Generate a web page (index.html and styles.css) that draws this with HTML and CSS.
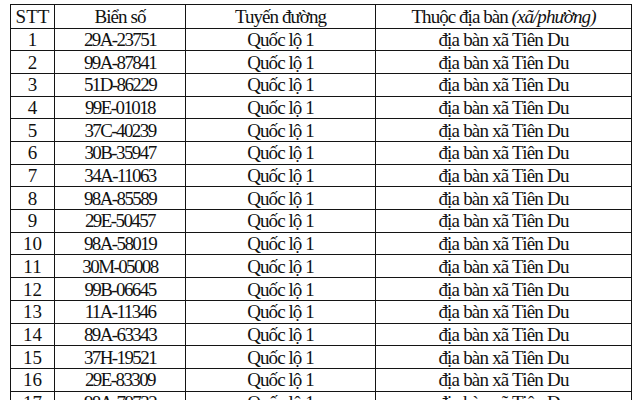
FILE: index.html
```html
<!DOCTYPE html>
<html lang="vi">
<head>
<meta charset="utf-8">
<title>Danh sách biển số</title>
<link rel="stylesheet" href="styles.css">
</head>
<body>
<table class="list">
  <colgroup>
    <col class="c-stt"><col class="c-plate"><col class="c-road"><col class="c-area">
  </colgroup>
  <thead>
    <tr><th class="stt">STT</th><th class="plate-h">Biển số</th><th class="road">Tuyến đường</th><th class="area-h">Thuộc địa bàn <i>(xã/phường)</i></th></tr>
  </thead>
  <tbody>
    <tr><td class="stt">1</td><td class="plate">29A-23751</td><td class="road">Quốc lộ 1</td><td class="area">địa bàn xã Tiên Du</td></tr>
    <tr><td class="stt">2</td><td class="plate">99A-87841</td><td class="road">Quốc lộ 1</td><td class="area">địa bàn xã Tiên Du</td></tr>
    <tr><td class="stt">3</td><td class="plate">51D-86229</td><td class="road">Quốc lộ 1</td><td class="area">địa bàn xã Tiên Du</td></tr>
    <tr><td class="stt">4</td><td class="plate">99E-01018</td><td class="road">Quốc lộ 1</td><td class="area">địa bàn xã Tiên Du</td></tr>
    <tr><td class="stt">5</td><td class="plate">37C-40239</td><td class="road">Quốc lộ 1</td><td class="area">địa bàn xã Tiên Du</td></tr>
    <tr><td class="stt">6</td><td class="plate">30B-35947</td><td class="road">Quốc lộ 1</td><td class="area">địa bàn xã Tiên Du</td></tr>
    <tr><td class="stt">7</td><td class="plate">34A-11063</td><td class="road">Quốc lộ 1</td><td class="area">địa bàn xã Tiên Du</td></tr>
    <tr><td class="stt">8</td><td class="plate">98A-85589</td><td class="road">Quốc lộ 1</td><td class="area">địa bàn xã Tiên Du</td></tr>
    <tr><td class="stt">9</td><td class="plate">29E-50457</td><td class="road">Quốc lộ 1</td><td class="area">địa bàn xã Tiên Du</td></tr>
    <tr><td class="stt">10</td><td class="plate">98A-58019</td><td class="road">Quốc lộ 1</td><td class="area">địa bàn xã Tiên Du</td></tr>
    <tr><td class="stt">11</td><td class="plate">30M-05008</td><td class="road">Quốc lộ 1</td><td class="area">địa bàn xã Tiên Du</td></tr>
    <tr><td class="stt">12</td><td class="plate">99B-06645</td><td class="road">Quốc lộ 1</td><td class="area">địa bàn xã Tiên Du</td></tr>
    <tr><td class="stt">13</td><td class="plate">11A-11346</td><td class="road">Quốc lộ 1</td><td class="area">địa bàn xã Tiên Du</td></tr>
    <tr><td class="stt">14</td><td class="plate">89A-63343</td><td class="road">Quốc lộ 1</td><td class="area">địa bàn xã Tiên Du</td></tr>
    <tr><td class="stt">15</td><td class="plate">37H-19521</td><td class="road">Quốc lộ 1</td><td class="area">địa bàn xã Tiên Du</td></tr>
    <tr><td class="stt">16</td><td class="plate">29E-83309</td><td class="road">Quốc lộ 1</td><td class="area">địa bàn xã Tiên Du</td></tr>
    <tr><td class="stt">17</td><td class="plate">98A-79732</td><td class="road">Quốc lộ 1</td><td class="area">địa bàn xã Tiên Du</td></tr>
    <tr><td class="stt">18</td><td class="plate">99A-12345</td><td class="road">Quốc lộ 1</td><td class="area">địa bàn xã Tiên Du</td></tr>
  </tbody>
</table>
</body>
</html>
```
FILE: styles.css
```css
html, body {
  margin: 0;
  padding: 0;
  background: #ffffff;
  overflow: hidden;
}
body {
  padding: 4px 0 0 10px;
  font-family: "Liberation Serif", "Times New Roman", serif;
  color: #111111;
}
.list {
  border-collapse: collapse;
  table-layout: fixed;
  width: 621px;
  font-size: 19px;
}
.c-stt { width: 44px; }
.c-plate { width: 131px; }
.c-road { width: 190px; }
.c-area { width: 256px; }
.list th,
.list td {
  border: 1.5px solid #141414;
  padding: 0;
  text-align: center;
  vertical-align: middle;
  line-height: 19px;
  white-space: nowrap;
  overflow: hidden;
}
.list th {
  font-weight: normal;
  height: 22.6px;
}
.list td {
  height: 21.7px;
}
.stt { letter-spacing: 0; }
.plate-h { letter-spacing: -0.9px; }
.plate { letter-spacing: -1.6px; }
.road { letter-spacing: -0.95px; }
.area { letter-spacing: -0.8px; }
.area-h { letter-spacing: -0.95px; }
```
